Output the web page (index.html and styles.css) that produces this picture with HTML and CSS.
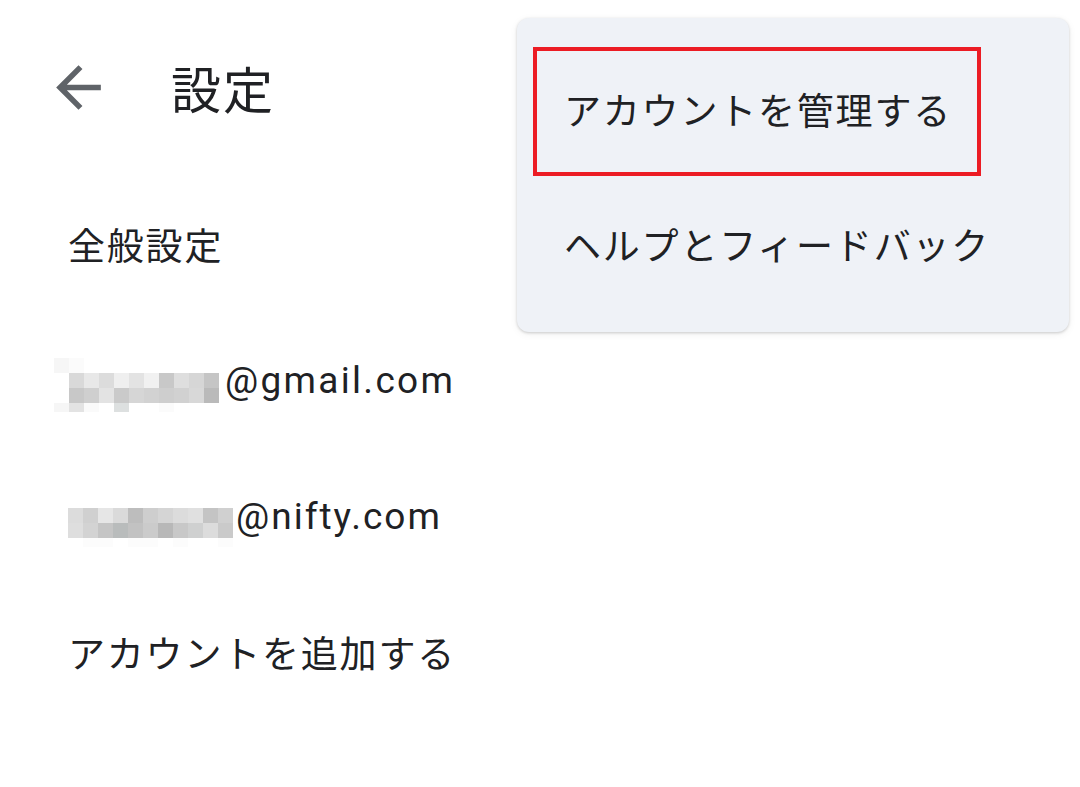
FILE: index.html
```html
<!DOCTYPE html>
<html lang="ja">
<head>
<meta charset="utf-8">
<link rel="stylesheet" href="styles.css">
</head>
<body>
<div class="screen">
  <header class="topbar">
    <svg class="back" viewBox="0 0 24 24" width="67" height="67"><path d="M20 11H7.83l5.59-5.59L12 4l-8 8 8 8 1.41-1.41L7.83 13H20v-2z" fill="#5f6368"/></svg>
    <h1 class="title">設定</h1>
  </header>
  <ul class="list">
    <li class="row"><span class="label">全般設定</span></li>
    <li class="row email gmail">
      <div class="blur">
        <div class="bl-row faint">
          <i style="background:#f6f6f6"></i><i style="background:#fbfbfb"></i>
        </div>
        <div class="bl-row">
          <i></i><i style="background:#d9d9d9"></i><i style="background:#e8e8e8"></i><i style="background:#dcdcdc"></i><i style="background:#efefef"></i><i style="background:#e3e3e3"></i><i style="background:#f1f1f1"></i><i style="background:#c8c8c8"></i><i style="background:#dedede"></i><i style="background:#d6d6d6"></i><i style="background:#c5c5c5"></i>
        </div>
        <div class="bl-row">
          <i></i><i style="background:#c8c8c8"></i><i style="background:#cfcfcf"></i><i style="background:#e3e3e3"></i><i style="background:#cacaca"></i><i style="background:#d6d6d6"></i><i style="background:#d2d2d2"></i><i style="background:#cecece"></i><i style="background:#d1d1d1"></i><i style="background:#d8d8d8"></i><i style="background:#bababa"></i>
        </div>
        <div class="bl-row short">
          <i style="background:#f6f6f6"></i><i style="background:#e3e3e3"></i><i style="background:#fafafa"></i><i></i><i style="background:#dde0e0"></i><i></i><i></i><i style="background:#fbfbfb"></i>
        </div>
      </div>
      <span class="addr">@gmail.com</span>
    </li>
    <li class="row email nifty">
      <div class="blur">
        <div class="bl-row">
          <i style="background:#dcdcdc"></i><i style="background:#d0d0d0"></i><i style="background:#e6e6e6"></i><i style="background:#dadada"></i><i style="background:#bdbdbd"></i><i style="background:#cecece"></i><i style="background:#d5d5d5"></i><i style="background:#dcdcdc"></i><i style="background:#e0e0e0"></i><i style="background:#c4c4c4"></i><i style="background:#d0d0d0"></i>
        </div>
        <div class="bl-row">
          <i style="background:#dedede"></i><i style="background:#d3d3d3"></i><i style="background:#c5c5c5"></i><i style="background:#b9bcbc"></i><i style="background:#c2c2c2"></i><i style="background:#cbcbcb"></i><i style="background:#b8b8b8"></i><i style="background:#c8c8c8"></i><i style="background:#cfd0d0"></i><i style="background:#dcdcdc"></i><i style="background:#cacaca"></i>
        </div>
        <div class="bl-row short">
          <i></i><i style="background:#fcfcfc"></i><i style="background:#fcfcfc"></i><i></i><i style="background:#fcfcfc"></i><i style="background:#fcfcfc"></i><i></i><i style="background:#fcfcfc"></i><i></i><i></i><i style="background:#fcfcfc"></i>
        </div>
      </div>
      <span class="addr">@nifty.com</span>
    </li>
    <li class="row"><span class="label">アカウントを追加する</span></li>
  </ul>

  <div class="menu">
    <div class="menu-item">アカウントを管理する</div>
    <div class="menu-item">ヘルプとフィードバック</div>
    <div class="highlight"></div>
  </div>
</div>
</body>
</html>
```

FILE: styles.css
```css
* { box-sizing: border-box; }
html, body {
  margin: 0;
  padding: 0;
  background: #ffffff;
}
body {
  font-family: Roboto, "Noto Sans CJK JP", "Noto Sans", sans-serif;
  color: #202124;
}
.screen {
  position: relative;
  width: 1080px;
  height: 787px;
  overflow: hidden;
}
.topbar {
  height: 176px;
  display: flex;
  align-items: flex-start;
  padding-top: 54px;
  padding-left: 45px;
}
.back {
  display: block;
  flex: none;
}
.title {
  margin: 0 0 0 59px;
  font-weight: 400;
  font-size: 50px;
  letter-spacing: 2px;
  line-height: 66px;
  font-family: "Noto Sans CJK JP", sans-serif;
  color: #202124;
}
.list {
  list-style: none;
  margin: 0;
  padding: 0;
}
.row {
  height: 136px;
  display: flex;
  align-items: center;
  padding-left: 68px;
}
.label {
  font-family: "Noto Sans CJK JP", sans-serif;
  font-size: 37px;
  letter-spacing: 1.8px;
  line-height: 1;
}
.email {
  position: relative;
}
.addr {
  font-family: Roboto, sans-serif;
  font-size: 37px;
  letter-spacing: 2.3px;
  line-height: 1;
}
.nifty .addr { letter-spacing: 2px; }
.blur {
  display: flex;
  flex-direction: column;
}
.bl-row {
  display: flex;
  height: 15px;
}
.bl-row.short { height: 9px; }
.bl-row i {
  display: block;
  width: 15px;
  height: 100%;
  flex: none;
}
.gmail { padding-left: 54px; }
.gmail .blur { margin-top: 10px; margin-right: 6px; }
.nifty { padding-left: 68px; }
.nifty .blur { margin-top: 22px; margin-right: 3px; }

.menu {
  position: absolute;
  left: 517px;
  top: 18px;
  width: 552px;
  height: 314px;
  background: #eff2f7;
  border-radius: 12px;
  box-shadow: 0 1px 3px rgba(0,0,0,0.18), 0 2px 8px rgba(0,0,0,0.06);
  padding-top: 23px;
  display: flex;
  flex-direction: column;
}
.menu-item {
  height: 135px;
  display: flex;
  align-items: center;
  padding-left: 47px;
  font-family: "Noto Sans CJK JP", sans-serif;
  font-size: 37px;
  letter-spacing: 1.8px;
  color: #202124;
}
.highlight {
  position: absolute;
  left: 16px;
  top: 29px;
  width: 448px;
  height: 129px;
  border: 4px solid #ec1c24;
}
```
